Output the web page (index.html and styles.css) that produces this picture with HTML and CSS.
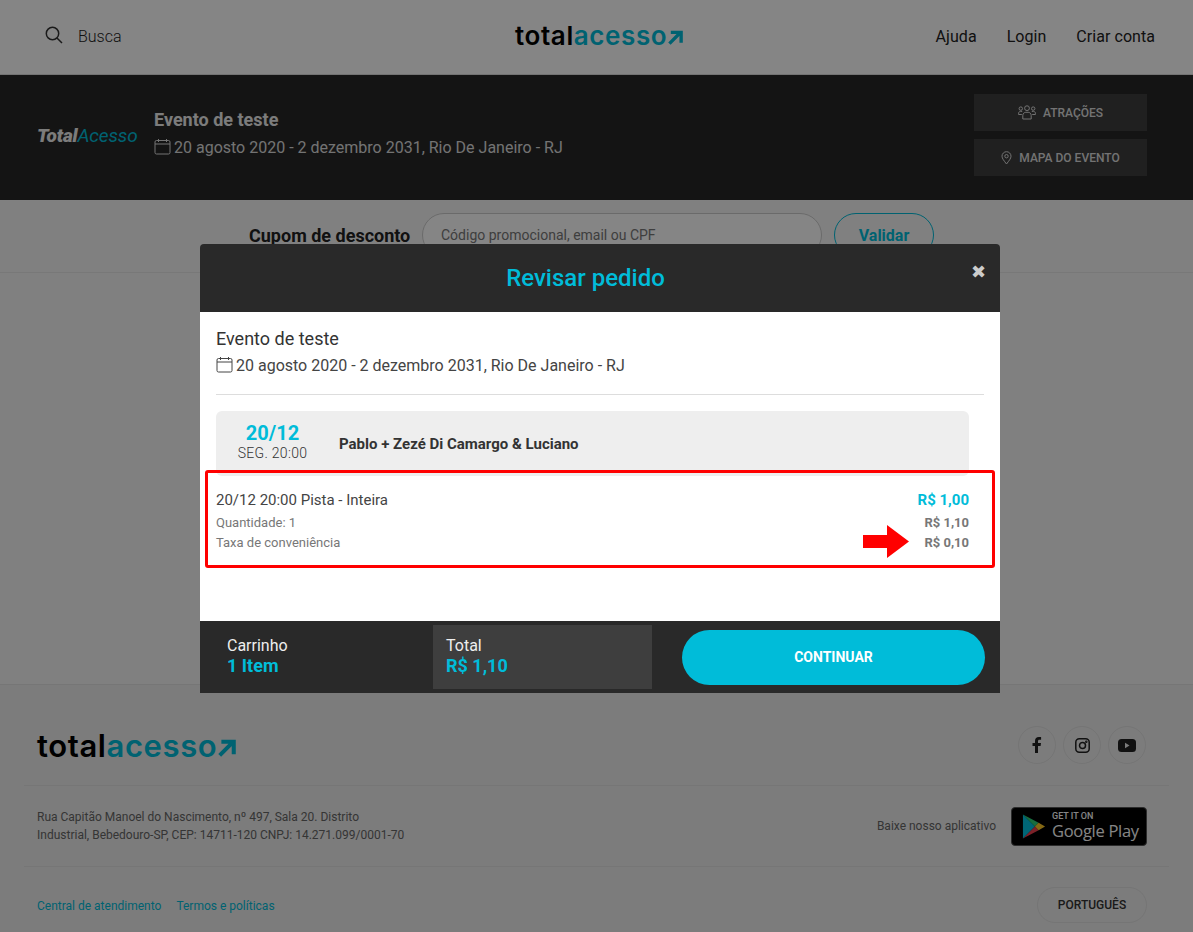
FILE: index.html
```html
<!DOCTYPE html>
<html lang="pt-BR">
<head>
  <meta charset="UTF-8">
  <meta name="viewport" content="width=device-width, initial-scale=1.0">
  <title>Total Acesso - Revisar pedido</title>
  <link rel="stylesheet" href="styles.css">
</head>
<body>
  <header class="top-bar">
    <div class="search">
      <svg class="search-icon" width="18" height="18" viewBox="0 0 18 18" fill="none" stroke="#333" stroke-width="1.5"><circle cx="7.5" cy="7.5" r="6.2"/><path d="M12 12l5 5"/></svg>
      <span>Busca</span>
    </div>
    <a class="logo"><span class="logo-dark">total</span><span class="logo-teal">acesso</span><svg class="logo-arrow" viewBox="0 0 16 16" fill="none" stroke="#00bcd9" stroke-width="3.6"><path d="M1.5 14.5L13 3M3 2.5h11v11"/></svg></a>
    <nav class="top-nav">
      <a>Ajuda</a>
      <a>Login</a>
      <a>Criar conta</a>
    </nav>
  </header>

  <section class="event-band">
    <div class="event-brand"><b>Total</b><span>Acesso</span></div>
    <div class="event-info">
      <h2>Evento de teste</h2>
      <p>
        <svg class="cal" width="17" height="17" viewBox="0 0 17 17" fill="none" stroke="currentColor" stroke-width="1"><rect x="1" y="2.5" width="15" height="13.5" rx="1.5"/><path d="M1 6h15M4.5 1v3M12.5 1v3"/></svg>
        20 agosto 2020 - 2 dezembro 2031, Rio De Janeiro - RJ
      </p>
    </div>
    <div class="event-actions">
      <a class="event-btn">
        <svg width="18" height="15" viewBox="0 0 18 15" fill="none" stroke="currentColor" stroke-width="1"><circle cx="9" cy="3.2" r="2.4"/><circle cx="2.8" cy="3.6" r="1.7"/><circle cx="15.2" cy="3.6" r="1.7"/><path d="M4.8 14v-3.5c0-2 1.5-3.2 3-3.2h2.4c1.5 0 3 1.2 3 3.2V14zM3.8 9.5H.6V8.2c0-1 .8-1.8 1.8-1.8h1.8M14.2 9.5h3.2V8.2c0-1-.8-1.8-1.8-1.8h-1.8"/></svg>
        Atrações
      </a>
      <a class="event-btn">
        <svg width="11" height="14" viewBox="0 0 11 14" fill="none" stroke="currentColor" stroke-width="1"><path d="M5.5 13C3 9.6 1 7.6 1 5.2a4.5 4.5 0 0 1 9 0C10 7.6 8 9.6 5.5 13z"/><circle cx="5.5" cy="5.2" r="1.7"/></svg>
        Mapa do evento
      </a>
    </div>
  </section>

  <section class="coupon">
    <label class="coupon-label">Cupom de desconto</label>
    <div class="coupon-input">Código promocional, email ou CPF</div>
    <a class="coupon-btn">Validar</a>
  </section>

  <main class="empty-main"></main>

  <footer class="site-footer">
    <div class="footer-row footer-top">
      <a class="logo logo-big"><span class="logo-dark">total</span><span class="logo-teal">acesso</span><svg class="logo-arrow" viewBox="0 0 16 16" fill="none" stroke="#00bcd9" stroke-width="3.6"><path d="M1.5 14.5L13 3M3 2.5h11v11"/></svg></a>
      <div class="socials">
        <a class="social"><svg width="10" height="16" viewBox="0 0 10 16" fill="#222"><path d="M3 16V9H.5V6H3V4c0-2.600 1.500-4 3.800-4 1.100 0 2 .1 2.300.1v2.700H7.500C6.300 2.800 6 3.400 6 4.300V6h3l-.4 3H6v7z"/></svg></a>
        <a class="social"><svg width="15" height="15" viewBox="0 0 15 15" fill="none" stroke="#222" stroke-width="1.500"><rect x=".8" y=".8" width="13.400" height="13.400" rx="3.500"/><circle cx="7.500" cy="7.500" r="3"/><circle cx="11.300" cy="3.700" r=".5"/></svg></a>
        <a class="social"><svg width="18" height="13" viewBox="0 0 18 13"><rect width="18" height="13" rx="3.500" fill="#222"/><path d="M7 3.800v5.400L11.500 6.500z" fill="#eee"/></svg></a>
      </div>
    </div>
    <div class="footer-row footer-mid">
      <p class="address">Rua Capitão Manoel do Nascimento, nº 497, Sala 20. Distrito<br>Industrial, Bebedouro-SP, CEP: 14711-120 CNPJ: 14.271.099/0001-70</p>
      <div class="app-link">
        <span>Baixe nosso aplicativo</span>
        <a class="play-badge">
          <svg width="24" height="27" viewBox="0 0 26 28"><path d="M1 1l13 13L1 27z" fill="#00c3e3"/><path d="M1 1l17 9-4 4z" fill="#2ed47a"/><path d="M1 27l17-9-4-4z" fill="#f0414f"/><path d="M18 10l7 4-7 4-4-4z" fill="#ffca28"/></svg>
          <span class="play-text"><small>GET IT ON</small><b>Google Play</b></span>
        </a>
      </div>
    </div>
    <div class="footer-row footer-bottom">
      <div class="footer-links">
        <a>Central de atendimento</a>
        <a>Termos e políticas</a>
      </div>
      <a class="lang-btn">Português</a>
    </div>
  </footer>

  <div class="overlay">
    <div class="modal">
      <div class="modal-head">
        <h3>Revisar pedido</h3>
        <span class="modal-close">&#10006;</span>
      </div>
      <div class="modal-body">
        <h4>Evento de teste</h4>
        <p class="modal-date">
          <svg class="cal" width="17" height="17" viewBox="0 0 17 17" fill="none" stroke="currentColor" stroke-width="1"><rect x="1" y="2.500" width="15" height="13.500" rx="1.500"/><path d="M1 6h15M4.500 1v3M12.500 1v3"/></svg>
          20 agosto 2020 - 2 dezembro 2031, Rio De Janeiro - RJ
        </p>
        <hr class="modal-rule">
        <div class="show-box">
          <div class="show-date"><b>20/12</b><span>SEG. 20:00</span></div>
          <div class="show-name">Pablo + Zezé Di Camargo &amp; Luciano</div>
        </div>
        <div class="line-item">
          <div class="line-row">
            <span class="line-name">20/12 20:00 Pista - Inteira</span>
            <b class="line-price">R$ 1,00</b>
          </div>
          <div class="line-row small">
            <span>Quantidade: 1</span>
            <b>R$ 1,10</b>
          </div>
          <div class="line-row small">
            <span>Taxa de conveniência</span>
            <b>R$ 0,10</b>
          </div>
        </div>
        <div class="red-box"></div>
        <svg class="red-arrow" width="46" height="33" viewBox="0 0 46 33"><path d="M0 10h24V0l22 16.500L24 33V23H0z" fill="#ff0000"/></svg>
      </div>
      <div class="modal-foot">
        <div class="cart-cell"><span>Carrinho</span><b>1 Item</b></div>
        <div class="total-cell"><span>Total</span><b>R$ 1,10</b></div>
        <a class="continue-btn">CONTINUAR</a>
      </div>
    </div>
  </div>
</body>
</html>
```

FILE: styles.css
```css
* {
  box-sizing: border-box;
}
html, body {
  margin: 0;
  height: 932px;
  overflow: hidden;
}
body {
  font-family: Roboto, Arial, sans-serif;
  background-color: #f6f6f6;
  color: #333;
  display: flex;
  flex-direction: column;
}
h2, h3, h4, p {
  margin: 0;
}

/* top bar */
.top-bar {
  height: 75px;
  flex: none;
  background-color: #fff;
  border-bottom: 1px solid #ddd;
  display: grid;
  grid-template-columns: 1fr auto 1fr;
  align-items: center;
  padding: 0 38px 2px 45px;
}
.search {
  display: flex;
  align-items: center;
  gap: 15px;
  font-size: 16px;
  font-weight: 300;
  color: #222;
}
.search-icon {
  margin-top: -3px;
}
.logo {
  display: flex;
  align-items: center;
  font-family: Inter, Lato, sans-serif;
  font-size: 26px;
  line-height: 24px;
  font-weight: 600;
  letter-spacing: 0.6px;
  width: 170px;
  height: 24px;
}
.logo-dark {
  color: #000;
}
.logo-teal {
  color: #00bcd9;
}
.logo-arrow {
  width: 15px;
  height: 15px;
  margin: 3px 0 0 1px;
}
.logo-big {
  font-size: 31px;
  letter-spacing: 0.6px;
  width: 200px;
  height: 28px;
}
.logo-big .logo-arrow {
  width: 18px;
  height: 18px;
}
.top-nav {
  display: flex;
  justify-content: flex-end;
  gap: 30px;
  font-size: 16px;
  letter-spacing: 0.05px;
  color: #222;
}

/* event band */
.event-band {
  height: 125px;
  flex: none;
  background-color: #282828;
  display: flex;
  align-items: center;
  padding: 0 46px 0 37px;
  color: #ddd;
}
.event-brand {
  width: 117px;
  margin-top: -4px;
  font-size: 19px;
  font-style: italic;
  letter-spacing: -0.15px;
  color: #00bcd9;
}
.event-brand b {
  font-weight: 900;
  color: #eee;
}
.event-info {
  flex: 1;
  margin-top: -8px;
}
.event-info h2 {
  font-size: 18px;
  line-height: 22px;
  margin-bottom: 7px;
  color: #eee;
}
.event-info p {
  font-size: 16px;
  line-height: 20px;
  display: flex;
  align-items: center;
  gap: 3px;
}
.cal {
  flex: none;
  margin-top: -3px;
}
.event-actions {
  width: 173px;
  margin-top: -6px;
  display: flex;
  flex-direction: column;
  gap: 8px;
}
.event-btn {
  height: 37px;
  padding-top: 1px;
  background-color: #3f3f3f;
  display: flex;
  align-items: center;
  justify-content: center;
  gap: 7px;
  font-size: 12px;
  font-weight: 500;
  text-transform: uppercase;
}

/* coupon */
.coupon {
  height: 73px;
  flex: none;
  border-bottom: 1px solid #e6e6e6;
  display: flex;
  align-items: flex-start;
  padding: 13px 0 0 249px;
}
.coupon-label {
  font-size: 18px;
  font-weight: 700;
  line-height: 46px;
  width: 173px;
  color: #222;
}
.coupon-input {
  width: 400px;
  height: 44px;
  border: 1px solid #ccc;
  border-radius: 22px;
  background-color: #fff;
  padding: 0 18px;
  font-size: 14px;
  line-height: 43px;
  color: #777;
}
.coupon-btn {
  width: 100px;
  height: 44px;
  margin-left: 12px;
  border: 1px solid #00bcd9;
  border-radius: 22px;
  text-align: center;
  font-size: 16px;
  font-weight: 700;
  line-height: 43px;
  color: #00bcd9;
}
.empty-main {
  flex: 1;
}

/* footer */
.site-footer {
  height: 248px;
  flex: none;
  background-color: #eeeeee;
  border-top: 1px solid #e2e2e2;
  padding: 0 24px;
}
.footer-row {
  display: flex;
  justify-content: space-between;
  align-items: center;
  padding: 0 22px 0 13px;
}
.footer-top {
  height: 101px;
  border-bottom: 1px solid #e2e2e2;
}
.socials {
  display: flex;
  gap: 7px;
  margin: 20px 1px 0 0;
}
.footer-top .logo {
  margin-top: 22px;
}
.social {
  width: 38px;
  height: 38px;
  border: 1px solid #e0e0e0;
  border-radius: 50%;
  display: flex;
  align-items: center;
  justify-content: center;
}
.footer-mid {
  height: 81px;
  border-bottom: 1px solid #e2e2e2;
}
.address {
  font-size: 12px;
  line-height: 18px;
  color: #666;
}
.app-link {
  display: flex;
  align-items: center;
  gap: 15px;
  font-size: 12px;
  color: #666;
}
.play-badge {
  width: 136px;
  height: 39px;
  background-color: #000;
  border: 1px solid #555;
  border-radius: 4px;
  display: flex;
  align-items: center;
  gap: 6px;
  padding-left: 10px;
  color: #fff;
}
.play-text {
  display: flex;
  flex-direction: column;
}
.play-text small {
  font-size: 9px;
  font-weight: 500;
  line-height: 9px;
}
.play-text b {
  font-family: "Open Sans", Roboto, sans-serif;
  font-size: 16.5px;
  font-weight: 400;
  letter-spacing: -0.3px;
  line-height: 19px;
}
.footer-bottom {
  height: 78px;
}
.footer-links {
  display: flex;
  gap: 15px;
  font-size: 12px;
  color: #00bcd9;
}
.lang-btn {
  width: 110px;
  height: 36px;
  margin-top: -2px;
  border: 1px solid #e0e0e0;
  border-radius: 18px;
  text-align: center;
  font-size: 12px;
  font-weight: 500;
  line-height: 34px;
  text-transform: uppercase;
  color: #333;
}

/* modal */
.overlay {
  position: fixed;
  top: 0;
  left: 0;
  right: 0;
  bottom: 0;
  background-color: rgba(0, 0, 0, 0.48);
}
.modal {
  position: relative;
  width: 800px;
  margin: 244px 0 0 200px;
  display: flex;
  flex-direction: column;
  border-radius: 4px 4px 0 0;
}
.modal-head {
  height: 68px;
  background-color: #292929;
  border-radius: 4px 4px 0 0;
  display: flex;
  align-items: center;
  justify-content: center;
  position: relative;
}
.modal-head h3 {
  font-size: 24px;
  font-weight: 500;
  color: #00bcd9;
  margin-left: -29px;
}
.modal-close {
  position: absolute;
  top: 16px;
  right: 14px;
  font-family: "DejaVu Sans", sans-serif;
  font-size: 18px;
  line-height: 24px;
  color: #ccc;
}
.modal-body {
  height: 309px;
  background-color: #fff;
  padding: 16px;
  position: relative;
}
.modal-body h4 {
  font-size: 18px;
  font-weight: 400;
  line-height: 22px;
  color: #333;
}
.modal-date {
  font-size: 16px;
  line-height: 20px;
  margin-top: 6px;
  display: flex;
  align-items: center;
  gap: 3px;
  color: #444;
}
.modal-rule {
  border: none;
  border-top: 1px solid #ddd;
  margin: 18px 0 16px;
}
.show-box {
  width: 753px;
  height: 65px;
  background-color: #eeeeee;
  border-radius: 6px;
  display: flex;
  align-items: center;
}
.show-date {
  width: 113px;
  display: flex;
  flex-direction: column;
  align-items: center;
  margin-top: -4px;
}
.show-date b {
  font-size: 20px;
  line-height: 23px;
  color: #00bcd9;
}
.show-date span {
  font-size: 14px;
  line-height: 17px;
  font-weight: 300;
  letter-spacing: 0.3px;
  color: #333;
}
.show-name {
  margin: 0 0 0 10px;
  font-size: 15px;
  font-weight: 700;
  color: #333;
}
.line-item {
  width: 753px;
  padding-top: 12px;
}
.line-row {
  display: flex;
  justify-content: space-between;
  align-items: center;
  height: 20px;
}
.line-name {
  font-size: 15px;
  color: #444;
}
.line-price {
  font-size: 15px;
  color: #00bcd9;
}
.small {
  font-size: 13px;
  color: #777;
}
.line-item .line-row:first-child {
  height: 24px;
}
.red-box {
  position: absolute;
  top: 158px;
  left: 5px;
  width: 790px;
  height: 98px;
  border: 3px solid #ff0000;
  border-radius: 3px;
}
.red-arrow {
  position: absolute;
  top: 213px;
  left: 663px;
}
.modal-foot {
  height: 72px;
  background-color: #292929;
  display: flex;
  align-items: center;
}
.cart-cell, .total-cell {
  display: flex;
  flex-direction: column;
  justify-content: center;
  color: #eee;
  font-size: 16px;
  line-height: 20px;
  padding-bottom: 3px;
}
.cart-cell b, .total-cell b {
  font-size: 18px;
  font-weight: 700;
  line-height: 19px;
  color: #00bcd9;
}
.cart-cell {
  width: 233px;
  padding-left: 27px;
}
.total-cell {
  width: 219px;
  height: 64px;
  padding-left: 13px;
  background-color: #3e3e3e;
}
.continue-btn {
  width: 303px;
  height: 55px;
  margin-left: 30px;
  border-radius: 28px;
  background-color: #00bcd9;
  text-align: center;
  font-size: 14px;
  font-weight: 700;
  line-height: 55px;
  color: #fff;
}
```
